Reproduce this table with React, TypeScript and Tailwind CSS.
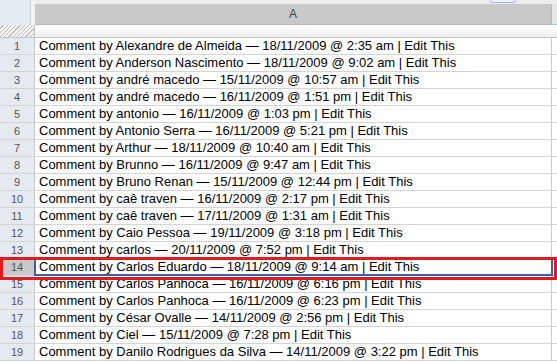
import React from 'react';

const rows = [
  'Comment by Alexandre de Almeida — 18/11/2009 @ 2:35 am | Edit This',
  'Comment by Anderson Nascimento — 18/11/2009 @ 9:02 am | Edit This',
  'Comment by andré macedo — 15/11/2009 @ 10:57 am | Edit This',
  'Comment by andré macedo — 16/11/2009 @ 1:51 pm | Edit This',
  'Comment by antonio — 16/11/2009 @ 1:03 pm | Edit This',
  'Comment by Antonio Serra — 16/11/2009 @ 5:21 pm | Edit This',
  'Comment by Arthur — 18/11/2009 @ 10:40 am | Edit This',
  'Comment by Brunno — 16/11/2009 @ 9:47 am | Edit This',
  'Comment by Bruno Renan — 15/11/2009 @ 12:44 pm | Edit This',
  'Comment by caê traven — 16/11/2009 @ 2:17 pm | Edit This',
  'Comment by caê traven — 17/11/2009 @ 1:31 am | Edit This',
  'Comment by Caio Pessoa — 19/11/2009 @ 3:18 pm | Edit This',
  'Comment by carlos — 20/11/2009 @ 7:52 pm | Edit This',
  'Comment by Carlos Eduardo — 18/11/2009 @ 9:14 am | Edit This',
  'Comment by Carlos Panhoca — 16/11/2009 @ 6:16 pm | Edit This',
  'Comment by Carlos Panhoca — 16/11/2009 @ 6:23 pm | Edit This',
  'Comment by César Ovalle — 14/11/2009 @ 2:56 pm | Edit This',
  'Comment by Ciel — 15/11/2009 @ 7:28 pm | Edit This',
  'Comment by Danilo Rodrigues da Silva — 14/11/2009 @ 3:22 pm | Edit This',
];

function App() {
  return (
    <div className="w-[557px] h-[362px] overflow-hidden bg-white font-['Liberation_Sans',Arial,sans-serif] relative">
      {/* column header */}
      <div className="flex h-[25px]">
        <div className="w-[31px] bg-[#e3ebf4] border-r border-dotted border-[#b8b8b8]" />
        <div className="w-[4px] bg-[#f4f4f4]" />
        <div className="flex-1 flex flex-col">
          <div className="h-[4px] bg-[#ececec] relative">
            <div className="absolute left-[455px] -top-[2px] w-[26px] h-[5px] rounded-sm border border-[#9fb4d6] bg-[#eef2f8]" />
          </div>
          <div className="flex-1 flex">
            <div className="w-[517px] bg-[#c9c9c9] border-b border-[#a9c6e8] border-r border-[#b6b6b6] flex items-center justify-center text-[12px] text-[#444]">
              A
            </div>
            <div className="flex-1 bg-[#e6e6e6] border-b border-[#a9c6e8]" />
          </div>
        </div>
      </div>
      {/* frozen strip */}
      <div className="flex h-[13px] border-b border-[#c4c4c4]">
        <div
          className="w-[35px] border-r border-[#c4c4c4]"
          style={{ backgroundImage: 'repeating-linear-gradient(135deg, #f2f2f2 0px, #f2f2f2 2px, #bdbdbd 2px, #bdbdbd 3px)' }}
        />
        <div className="flex-1 bg-gradient-to-b from-white to-[#eeeeee]" />
      </div>
      {/* rows */}
      <div className="flex flex-col">
        {rows.map((text, i) => {
          const sel = i === 13;
          return (
            <div key={i} className="flex h-[17px] border-b border-[#d4d4d4]">
              <div
                className={`w-[35px] shrink-0 border-r border-[#c8c8c8] flex items-center justify-center text-[11px] text-[#555] ${sel ? 'bg-[#c8c8c8]' : 'bg-[#e5eaf1]'}`}
              >
                {i + 1}
              </div>
              <div className={`w-[517px] shrink-0 border-r border-[#c8c8c8] flex items-center pl-[4px] text-[13px] text-black whitespace-nowrap ${sel ? 'outline-2 outline-[#3d62a4] -outline-offset-1' : ''}`}>
                {text}
              </div>
              <div className="flex-1" />
            </div>
          );
        })}
      </div>
      {/* red highlight around row 14 */}
      <div className="absolute left-0 top-[257px] w-[557px] h-[23px] border-[3px] border-[#e01a1f] pointer-events-none" />
    </div>
  );
}

export default App;
